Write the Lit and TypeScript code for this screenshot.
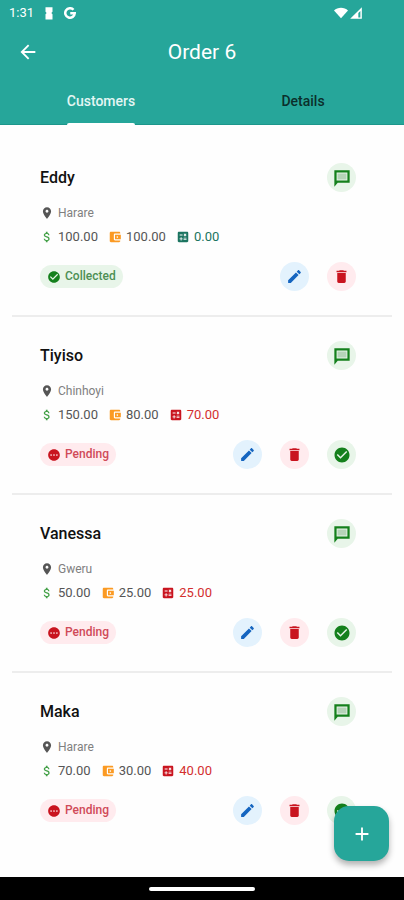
import { LitElement, html, css, svg, nothing } from "lit";
import { customElement, property, state } from "lit/decorators.js";
import { classMap } from "lit/directives/class-map.js";

const ICONS: Record<string, string> = {
  back: "M20 10.8H7.8l5.6-5.6L12 3.8 3.8 12l8.2 8.2 1.4-1.4-5.6-5.6H20z",
  place:
    "M12 2C8.13 2 5 5.13 5 9c0 5.25 7 13 7 13s7-7.75 7-13c0-3.87-3.13-7-7-7zm0 9.5c-1.38 0-2.5-1.12-2.5-2.5s1.12-2.5 2.5-2.5 2.5 1.12 2.5 2.5-1.12 2.5-2.5 2.5z",
  dollar:
    "M11.8 10.9c-2.27-.59-3-1.2-3-2.15 0-1.09 1.01-1.85 2.7-1.85 1.78 0 2.44.85 2.5 2.1h2.21c-.07-1.72-1.12-3.3-3.21-3.81V3h-3v2.16c-1.94.42-3.5 1.68-3.5 3.61 0 2.31 1.91 3.46 4.7 4.13 2.5.6 3 1.48 3 2.41 0 .69-.49 1.79-2.7 1.79-2.06 0-2.87-.92-2.98-2.1h-2.2c.12 2.19 1.76 3.42 3.68 3.83V21h3v-2.15c1.95-.37 3.5-1.5 3.5-3.55 0-2.84-2.43-3.81-4.7-4.4z",
  wallet:
    "M21 18v1c0 1.1-.9 2-2 2H5c-1.11 0-2-.9-2-2V5c0-1.1.89-2 2-2h14c1.1 0 2 .9 2 2v1h-9c-1.11 0-2 .9-2 2v8c0 1.1.89 2 2 2h9zm-9-2h10V8H12v8zm4-2.5c-.83 0-1.5-.67-1.5-1.5s.67-1.5 1.5-1.5 1.5.67 1.5 1.5-.67 1.5-1.5 1.5z",
  calculate:
    "M19 3H5c-1.1 0-2 .9-2 2v14c0 1.1.9 2 2 2h14c1.1 0 2-.9 2-2V5c0-1.1-.9-2-2-2zm-5.97 4.06L14.09 6l1.41 1.41L16.91 6l1.06 1.06-1.41 1.41 1.41 1.41-1.06 1.06-1.41-1.4-1.41 1.41-1.06-1.06 1.41-1.41-1.41-1.42zm-6.78.66h5v1.5h-5v-1.5zM11.5 16h-2v2H8v-2H6v-1.5h2v-2h1.5v2h2V16zm6.5 1.25h-5v-1.5h5v1.5zm0-2.5h-5v-1.5h5v1.5z",
  check:
    "M12 2C6.48 2 2 6.48 2 12s4.48 10 10 10 10-4.48 10-10S17.52 2 12 2zm-2 15l-5-5 1.41-1.41L10 14.17l7.59-7.59L19 8l-9 9z",
  pending:
    "M12 2C6.48 2 2 6.48 2 12s4.48 10 10 10 10-4.48 10-10S17.52 2 12 2zM7 13.5c-.83 0-1.5-.67-1.5-1.5s.67-1.5 1.5-1.5 1.5.67 1.5 1.5-.67 1.5-1.5 1.5zm5 0c-.83 0-1.5-.67-1.5-1.5s.67-1.5 1.5-1.5 1.5.67 1.5 1.5-.67 1.5-1.5 1.5zm5 0c-.83 0-1.5-.67-1.5-1.5s.67-1.5 1.5-1.5 1.5.67 1.5 1.5-.67 1.5-1.5 1.5z",
  edit:
    "M3 17.25V21h3.75L17.81 9.94l-3.75-3.75L3 17.25zM20.71 7.04c.39-.39.39-1.02 0-1.41l-2.34-2.34c-.39-.39-1.02-.39-1.41 0l-1.83 1.83 3.75 3.75 1.83-1.83z",
  delete: "M6 19c0 1.1.9 2 2 2h8c1.1 0 2-.9 2-2V7H6v12zM19 4h-3.5l-1-1h-5l-1 1H5v2h14V4z",
  add: "M19 13h-6v6h-2v-6H5v-2h6V5h2v6h6v2z",
  person: "M6 2h12v8l-2 2 2 2v9H6v-9l2-2-2-2z",
  wifi: "M12 21L0 7.5C3.2 4.600 7.400 3 12 3s8.800 1.600 12 4.500z",
  signal: "M22 2v20H2zM19.500 19.500v-11l-3.500 3.500v7.500z",
};

const icon = (name: string, size = "s") => html`<svg
  class="icon ${size}"
  viewBox="0 0 24 24"
  aria-hidden="true"
>
  <path fill-rule="evenodd" d=${ICONS[name]}></path>
</svg>`;

const messageIcon = html`<svg class="icon l" viewBox="0 0 24 24" aria-hidden="true">
  ${svg`<path class="lines" d="M6 6h12v8H6z"></path>
  <path class="bubble" d="M3.300 3.300h17.400v13.400H5.700L3.300 19.500z"></path>`}
</svg>`;

const iconStyles = css`
  .icon {
    display: block;
    flex: none;
    fill: currentColor;
    width: 14px;
    height: 14px;
  }
  .icon.m {
    width: 17px;
    height: 17px;
  }
  .icon.l {
    width: 18px;
    height: 18px;
  }
  .icon.xl {
    width: 22px;
    height: 22px;
  }
  button {
    font: inherit;
    border: 0;
    padding: 0;
    margin: 0;
    background: none;
    cursor: pointer;
  }
`;

interface Customer {
  name: string;
  city: string;
  total: number;
  paid: number;
}

const CUSTOMERS: Customer[] = [
  { name: "Eddy", city: "Harare", total: 100, paid: 100 },
  { name: "Tiyiso", city: "Chinhoyi", total: 150, paid: 80 },
  { name: "Vanessa", city: "Gweru", total: 50, paid: 25 },
  { name: "Maka", city: "Harare", total: 70, paid: 30 },
];

@customElement("customer-item")
export class CustomerItem extends LitElement {
  @property({ attribute: false }) customer!: Customer;

  static styles = [
    iconStyles,
    css`
      :host {
        display: block;
        padding: 24px 36px 24px 28px;
      }
      .row {
        display: flex;
        align-items: center;
        justify-content: space-between;
      }
      .name {
        margin: 0;
        font-size: 16px;
        line-height: 20px;
        font-weight: 500;
        color: #111;
      }
      .place,
      .amounts,
      .amount {
        display: flex;
        align-items: center;
        gap: 4px;
        line-height: 16px;
      }
      .place {
        margin: 13px 0 8px;
        font-size: 12px;
        color: #808080;
      }
      .place .icon {
        color: #555;
      }
      .amounts {
        gap: 10px;
        margin-bottom: 17px;
        font-size: 13px;
        color: #555;
      }
      .total .icon {
        color: #43a047;
      }
      .paid .icon {
        color: #fb9a23;
      }
      .due {
        color: #d32f2f;
      }
      .due .icon {
        color: #c9141f;
      }
      .due.clear,
      .due.clear .icon {
        color: #1b7460;
      }
      .chip {
        display: flex;
        align-items: center;
        gap: 4px;
        padding: 4px 7px;
        border-radius: 12px;
        font-size: 12px;
        line-height: 15px;
        font-weight: 500;
        background: #ffebee;
        color: #d04a58;
      }
      .chip .icon {
        color: #c9141f;
      }
      .chip.done {
        background: #e8f5e9;
        color: #4d8f54;
      }
      .chip.done .icon {
        color: #14801c;
      }
      .actions {
        display: flex;
        gap: 18px;
      }
      .round {
        display: grid;
        place-items: center;
        width: 29px;
        height: 29px;
        border-radius: 50%;
      }
      .green {
        background: #e8f5e9;
        color: #14801c;
      }
      .blue {
        background: #e3f2fd;
        color: #1565c0;
      }
      .red {
        background: #ffebee;
        color: #c9141f;
      }
      .lines {
        fill: #b5d3b8;
      }
      .bubble {
        fill: none;
        stroke: currentColor;
        stroke-width: 3;
      }
    `,
  ];

  render() {
    const { name, city, total, paid } = this.customer;
    const due = total - paid;
    const done = due === 0;
    return html`
      <div class="row">
        <h2 class="name">${name}</h2>
        <button class="round green" aria-label="Message ${name}">${messageIcon}</button>
      </div>
      <div class="place">${icon("place")}<span>${city}</span></div>
      <div class="amounts">
        <span class="amount total">${icon("dollar")}${total.toFixed(2)}</span>
        <span class="amount paid">${icon("wallet")}${paid.toFixed(2)}</span>
        <span class=${classMap({ amount: true, due: true, clear: done })}
          >${icon("calculate")}${due.toFixed(2)}</span
        >
      </div>
      <div class="row">
        <span class=${classMap({ chip: true, done })}
          >${icon(done ? "check" : "pending")}${done ? "Collected" : "Pending"}</span
        >
        <div class="actions">
          <button class="round blue" aria-label="Edit ${name}">${icon("edit", "m")}</button>
          <button class="round red" aria-label="Delete ${name}">${icon("delete", "m")}</button>
          ${done
            ? nothing
            : html`<button class="round green" aria-label="Collect from ${name}">
                ${icon("check", "l")}
              </button>`}
        </div>
      </div>
    `;
  }
}

@customElement("app-root")
export class AppRoot extends LitElement {
  @state() private tab = "Customers";

  static styles = [
    iconStyles,
    css`
      :host {
        display: flex;
        flex-direction: column;
        min-height: 100vh;
        background: #fefefe;
        font-family: Roboto, "Liberation Sans", sans-serif;
      }
      header {
        background: #26a69a;
        color: #fff;
      }
      .status {
        display: flex;
        align-items: center;
        gap: 8px;
        height: 25px;
        padding: 0 41px 0 9px;
        font-size: 13px;
      }
      .google {
        width: 12px;
        height: 12px;
        fill: none;
        stroke: currentColor;
        stroke-width: 5;
      }
      .network {
        display: flex;
        gap: 1px;
        margin-left: auto;
      }
      .bar {
        display: grid;
        grid-template-columns: 24px 1fr 24px;
        align-items: center;
        height: 54px;
        padding: 0 16px;
      }
      .title {
        margin: 0;
        font-size: 21px;
        line-height: 28px;
        font-weight: 400;
        text-align: center;
      }
      .back {
        display: grid;
        place-items: center;
        height: 24px;
        color: inherit;
      }
      .tabs {
        display: grid;
        grid-template-columns: 1fr 1fr;
        height: 46px;
        box-shadow: inset 0 -1px #1c968b;
      }
      .tab {
        display: grid;
        justify-content: center;
        grid-template-rows: 1fr 2px;
        align-items: center;
        font-size: 14px;
        font-weight: 500;
        color: #0b2f2c;
      }
      .tab::after {
        content: "";
        height: 2px;
        border-radius: 2px 2px 0 0;
      }
      .tab.active {
        color: #e4f6f4;
      }
      .tab.active::after {
        background: #fff;
      }
      main {
        position: relative;
        flex: 1;
        padding: 14px 12px;
      }
      customer-item + customer-item {
        border-top: 2px solid #ededed;
      }
      .fab {
        position: absolute;
        right: 15px;
        bottom: 16px;
        display: grid;
        place-items: center;
        width: 55px;
        height: 55px;
        border-radius: 15px;
        background: #26a69a;
        color: #fff;
        box-shadow: 0 4px 6px rgba(0, 0, 0, 0.3);
      }
      footer {
        display: grid;
        place-items: center;
        height: 23px;
        background: #000;
      }
      .pill {
        width: 26%;
        height: 4px;
        border-radius: 2px;
        background: #fff;
      }
    `,
  ];

  render() {
    return html`
      <header>
        <div class="status">
          <span>1:31</span>
          ${icon("person")}
          <svg class="google" viewBox="0 0 24 24" aria-hidden="true">
            <path d="M19 5.500A9.500 9.500 0 1 0 21.500 12.500H12.500"></path>
          </svg>
          <span class="network">${icon("wifi")}${icon("signal")}</span>
        </div>
        <div class="bar">
          <button class="back" aria-label="Back">${icon("back", "xl")}</button>
          <h1 class="title">Order 6</h1>
        </div>
        <div class="tabs" role="tablist">
          ${["Customers", "Details"].map(
            (label) => html`<button
              role="tab"
              aria-selected=${this.tab === label}
              class=${classMap({ tab: true, active: this.tab === label })}
              @click=${() => (this.tab = label)}
            >
              ${label}
            </button>`
          )}
        </div>
      </header>
      <main>
        ${CUSTOMERS.map((c) => html`<customer-item .customer=${c}></customer-item>`)}
        <button class="fab" aria-label="Add customer">${icon("add", "xl")}</button>
      </main>
      <footer><div class="pill"></div></footer>
    `;
  }
}
